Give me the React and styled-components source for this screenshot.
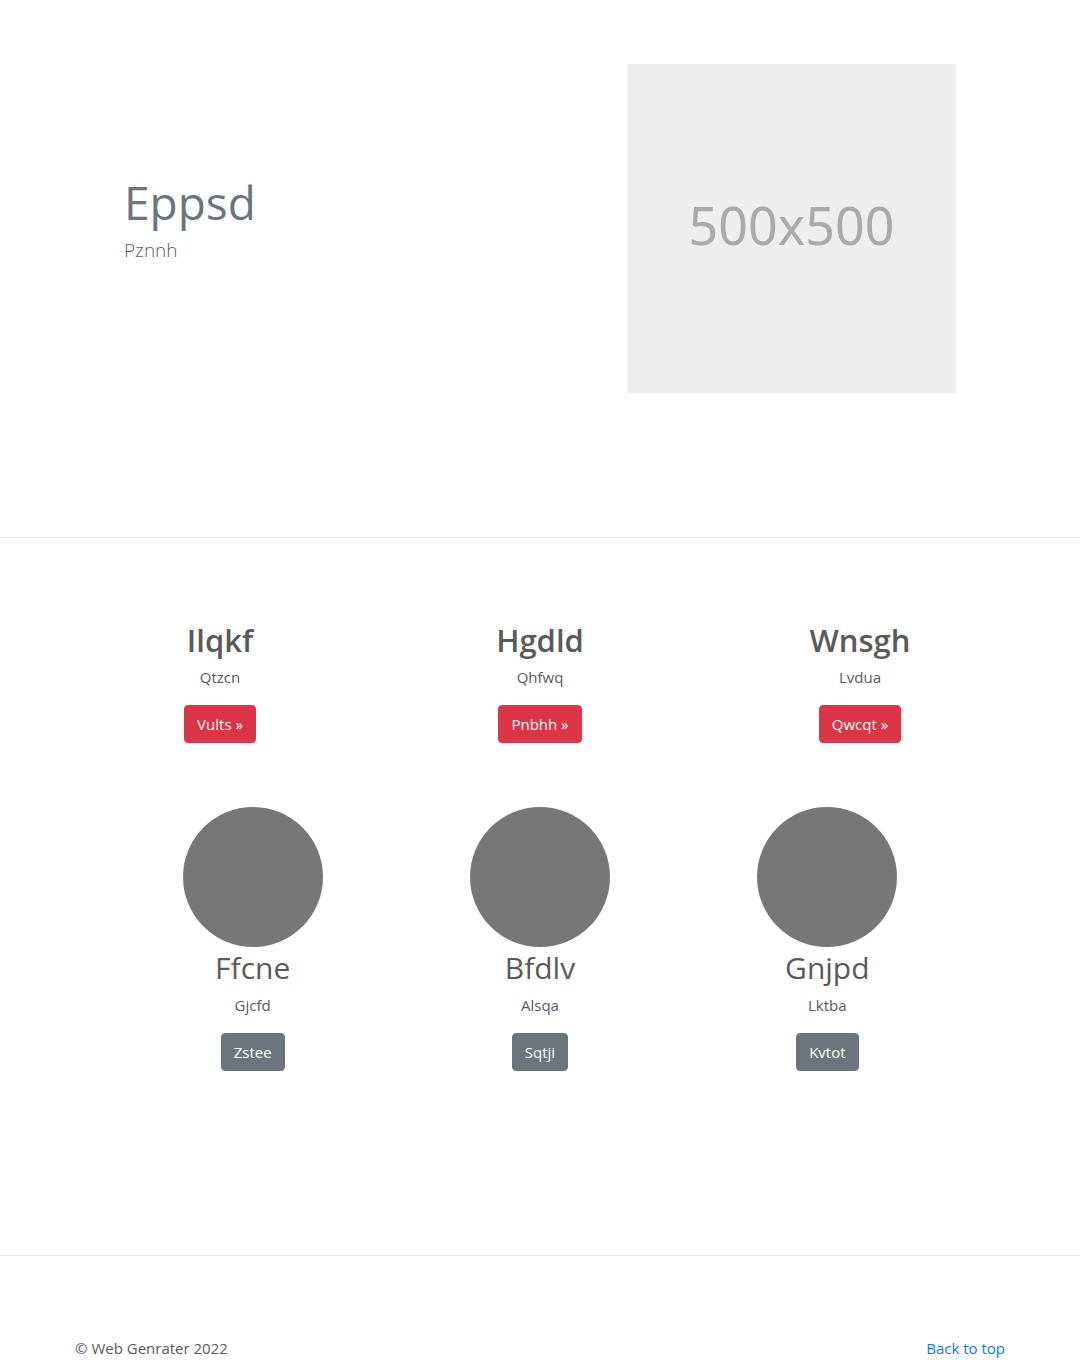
import React from "react";
import styled, { createGlobalStyle } from "styled-components";

const GlobalStyle = createGlobalStyle`
  *, *::before, *::after { box-sizing: border-box; }
  body {
    margin: 0;
    background: #fff;
    color: #5a5a5a;
    font-family: "Segoe UI", "Open Sans", "Noto Sans", sans-serif;
    font-size: 15px;
    line-height: 24px;
  }
  h1, h2, p { margin: 0; }
`;

const Container = styled.div`
  max-width: 960px;
  margin: 0 auto;
`;

const Hero = styled(Container)`
  display: grid;
  grid-template-columns: 7fr 5fr;
  align-items: center;
  padding: 64px 49px 144px;
`;

const HeroCell = styled.div`
  padding: 0 15px;
`;

const HeroTitle = styled.h1`
  margin-bottom: 8px;
  color: #6c757d;
  font-size: 46px;
  font-weight: 400;
  line-height: 50px;
`;

const Lead = styled.p`
  margin-bottom: 16px;
  font-size: 19px;
  font-weight: 300;
  line-height: 30px;
`;

const Placeholder = styled.div`
  display: flex;
  align-items: center;
  justify-content: center;
  aspect-ratio: 1;
  padding-bottom: 8px;
  background: #eee;
  color: #aaa;
  font-family: "Noto Sans", sans-serif;
  font-size: 52px;
  line-height: 64px;
`;

const Divider = styled.hr`
  margin: 0;
  border: 0;
  border-top: 1px solid #e5e5e5;
`;

const Columns = styled(Container)`
  display: grid;
  grid-template-columns: repeat(3, 1fr);
  padding: ${(p) => (p.$inset ? "64px 49px 184px" : "81px 0 0")};
`;

const Column = styled.section`
  display: flex;
  flex-direction: column;
  align-items: center;
  padding: 0 15px;
`;

const Heading = styled.h2`
  font-size: ${(p) => (p.$strong ? 31 : 30)}px;
  font-weight: ${(p) => (p.$strong ? 600 : 400)};
  line-height: 42px;
  margin-bottom: 4px;
`;

const Text = styled.p`
  margin-bottom: 16px;
`;

const Circle = styled.div`
  width: 140px;
  height: 140px;
  border-radius: 50%;
  background: #777;
`;

const Button = styled.button`
  padding: 6px 12px;
  border: 1px solid ${(p) => p.$color};
  border-radius: 4px;
  background: ${(p) => p.$color};
  color: #fff;
  font: inherit;
  cursor: pointer;
`;

const Footer = styled.footer`
  display: flex;
  justify-content: space-between;
  max-width: 960px;
  margin: 0 auto;
  padding: 80px 15px 0;
`;

const TopLink = styled.a`
  color: #007bff;
  text-decoration: none;
`;

const features = [
  { title: "Ilqkf", text: "Qtzcn", action: "Vults »" },
  { title: "Hgdld", text: "Qhfwq", action: "Pnbhh »" },
  { title: "Wnsgh", text: "Lvdua", action: "Qwcqt »" },
];

const people = [
  { title: "Ffcne", text: "Gjcfd", action: "Zstee" },
  { title: "Bfdlv", text: "Alsqa", action: "Sqtji" },
  { title: "Gnjpd", text: "Lktba", action: "Kvtot" },
];

export default function App() {
  return (
    <>
      <GlobalStyle />
      <main>
        <Hero>
          <HeroCell>
            <HeroTitle>Eppsd</HeroTitle>
            <Lead>Pznnh</Lead>
          </HeroCell>
          <HeroCell>
            <Placeholder>500x500</Placeholder>
          </HeroCell>
        </Hero>
        <Divider />
        <Columns>
          {features.map((item) => (
            <Column key={item.title}>
              <Heading $strong>{item.title}</Heading>
              <Text>{item.text}</Text>
              <Button type="button" $color="#dc3545">{item.action}</Button>
            </Column>
          ))}
        </Columns>
        <Columns $inset>
          {people.map((item) => (
            <Column key={item.title}>
              <Circle />
              <Heading>{item.title}</Heading>
              <Text>{item.text}</Text>
              <Button type="button" $color="#6c757d">{item.action}</Button>
            </Column>
          ))}
        </Columns>
      </main>
      <Divider />
      <Footer>
        <p>© Web Genrater 2022</p>
        <TopLink href="#">Back to top</TopLink>
      </Footer>
    </>
  );
}
